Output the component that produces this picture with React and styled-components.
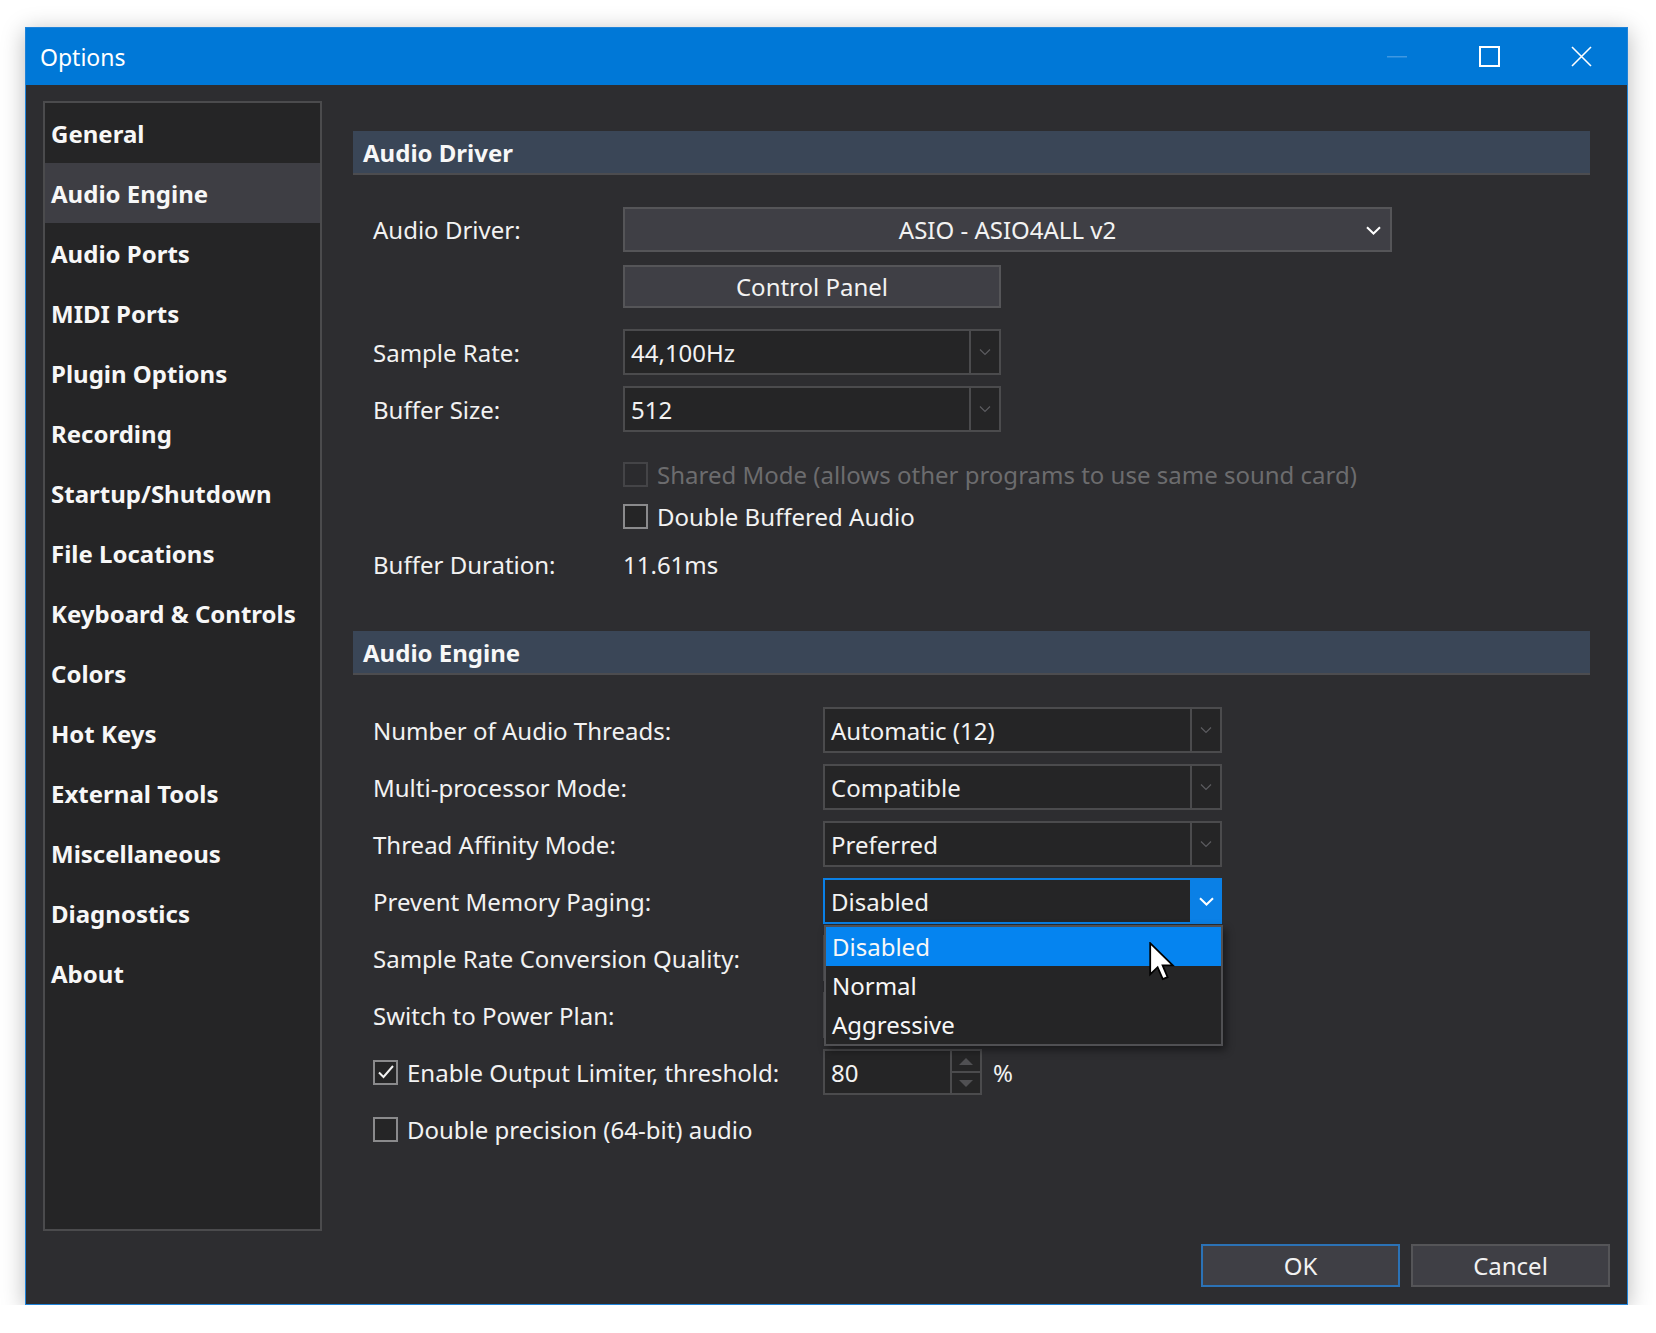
import React from "react";
import styled, { createGlobalStyle } from "styled-components";

const GlobalStyle = createGlobalStyle`
  html, body {
    margin: 0;
    padding: 0;
    background: #ffffff;
  }
  body {
    font-family: "Noto Sans", "Open Sans", sans-serif;
    color: #f2f2f2;
  }
`;

const navItems = [
  "General",
  "Audio Engine",
  "Audio Ports",
  "MIDI Ports",
  "Plugin Options",
  "Recording",
  "Startup/Shutdown",
  "File Locations",
  "Keyboard & Controls",
  "Colors",
  "Hot Keys",
  "External Tools",
  "Miscellaneous",
  "Diagnostics",
  "About",
];

const Page = styled.div`
  padding: 27px 0 0 25px;
`;

const Window = styled.div`
  width: 1603px;
  height: 1278px;
  box-sizing: border-box;
  border: 1px solid #1f83d9;
  background: #2d2d30;
  display: flex;
  flex-direction: column;
  box-shadow: 0 4px 22px rgba(0, 0, 0, 0.28);
`;

const TitleBar = styled.div`
  height: 57px;
  flex-shrink: 0;
  background: #0078d7;
  display: flex;
  align-items: center;
  padding-left: 14px;
`;

const Title = styled.div`
  flex: 1;
  font-size: 23px;
  color: #ffffff;
`;

const CaptionButton = styled.div`
  width: 92px;
  height: 57px;
  display: flex;
  align-items: center;
  justify-content: center;
`;

const Body = styled.div`
  flex: 1;
  padding: 16px 17px 17px;
  display: flex;
  flex-direction: column;
`;

const Main = styled.div`
  height: 1130px;
  display: flex;
  gap: 31px;
`;

const Sidebar = styled.div`
  width: 279px;
  box-sizing: border-box;
  border: 2px solid #4b4b4d;
  background: #252526;
`;

const NavItem = styled.div`
  height: 60px;
  display: flex;
  align-items: center;
  padding-left: 6px;
  font-size: 24px;
  font-weight: 700;
  color: #f7f7f7;
  background: ${(p) => (p.active ? "#3e3e44" : "transparent")};
`;

const Content = styled.div`
  flex: 1;
  margin-right: 20px;
  padding-top: 30px;
`;

const SectionHeader = styled.div`
  height: 42px;
  margin-top: ${(p) => p.top || 0}px;
  border-bottom: 2px solid #4c4c4f;
  background: #3a4657;
  display: flex;
  align-items: center;
  padding-left: 10px;
  font-size: 24px;
  font-weight: 700;
  color: #f7f7f7;
`;

const SectionBody = styled.div`
  padding: 32px 0 0 20px;
`;

const Row = styled.div`
  position: relative;
  display: flex;
  align-items: center;
  height: ${(p) => p.h || 46}px;
  margin-bottom: ${(p) => (p.gap === undefined ? 11 : p.gap)}px;
  padding-left: ${(p) => p.indent || 0}px;
`;

const Label = styled.div`
  width: ${(p) => p.w}px;
  flex-shrink: 0;
  font-size: 24px;
  color: ${(p) => (p.disabled ? "#6c6c6e" : "#f2f2f2")};
`;

const Value = styled.div`
  font-size: 24px;
`;

const DriverSelect = styled.div`
  width: 769px;
  height: 45px;
  box-sizing: border-box;
  border: 2px solid #555558;
  background: #3f3f45;
  display: flex;
  align-items: center;
  position: relative;
  font-size: 24px;
  justify-content: center;
`;

const DriverChevron = styled.svg`
  position: absolute;
  right: 9px;
  top: 17px;
`;

const PushButton = styled.div`
  width: ${(p) => p.w}px;
  height: 43px;
  box-sizing: border-box;
  border: 2px solid ${(p) => (p.primary ? "#2b72b6" : "#555558")};
  background: #3f3f45;
  display: flex;
  align-items: center;
  justify-content: center;
  font-size: 24px;
  color: #f2f2f2;
`;

const Select = styled.div`
  position: relative;
  width: ${(p) => p.w}px;
  height: 46px;
  box-sizing: border-box;
  border: 2px solid ${(p) => (p.focused ? "#0a80e6" : "#4b4b4d")};
  background: #252526;
  display: flex;
  align-items: stretch;
`;

const SelectText = styled.div`
  flex: 1;
  display: flex;
  align-items: center;
  padding-left: 6px;
  font-size: 24px;
`;

const SelectArrow = styled.div`
  width: 30px;
  box-sizing: border-box;
  border-left: 2px solid ${(p) => (p.focused ? "#0a80e6" : "#4b4b4d")};
  background: ${(p) => (p.focused ? "#0a80e6" : "transparent")};
  display: flex;
  align-items: center;
  justify-content: center;
`;

const Popup = styled.div`
  position: absolute;
  top: calc(100% + 3px);
  left: -1px;
  width: 399px;
  box-sizing: border-box;
  border: 2px solid #505053;
  background: #252526;
  box-shadow: 3px 4px 8px rgba(0, 0, 0, 0.45);
  z-index: 5;
`;

const PopupItem = styled.div`
  height: 39px;
  display: flex;
  align-items: center;
  padding-left: 6px;
  font-size: 24px;
  color: #f7f7f7;
  background: ${(p) => (p.active ? "#0584f0" : "transparent")};
`;

const Cursor = styled.svg`
  position: absolute;
  left: 323px;
  top: 15px;
`;

const CheckRow = styled.div`
  display: flex;
  align-items: center;
  height: ${(p) => p.h || 42}px;
  padding-left: ${(p) => p.indent || 0}px;
  margin-bottom: ${(p) => p.gap || 0}px;
`;

const CheckBox = styled.div`
  width: 25px;
  height: 25px;
  box-sizing: border-box;
  flex-shrink: 0;
  border: 2px solid ${(p) => (p.disabled ? "#444447" : "#8a8a8c")};
  background: ${(p) => (p.disabled ? "#2b2b2e" : "#252526")};
  margin-right: 9px;
  display: flex;
  align-items: center;
  justify-content: center;
`;

const CheckLabel = styled.div`
  font-size: 24px;
  color: ${(p) => (p.disabled ? "#6c6c6e" : "#f2f2f2")};
`;

const Spin = styled.div`
  width: 159px;
  height: 46px;
  box-sizing: border-box;
  border: 2px solid #4b4b4d;
  background: #252526;
  display: flex;
`;

const SpinButtons = styled.div`
  width: 30px;
  box-sizing: border-box;
  border-left: 2px solid #4b4b4d;
  display: flex;
  flex-direction: column;
`;

const SpinHalf = styled.div`
  flex: 1;
  display: flex;
  align-items: center;
  justify-content: center;
  border-top: ${(p) => (p.lower ? "2px solid #4b4b4d" : "none")};
`;

const Unit = styled.div`
  font-size: 24px;
  margin-left: 11px;
`;

const Footer = styled.div`
  margin-top: 13px;
  display: flex;
  justify-content: flex-end;
  gap: 11px;
`;

const FaintChevron = () => (
  <svg width="12" height="8" viewBox="0 0 12 8">
    <path d="M1 1.5 L6 6.5 L11 1.5" fill="none" stroke="#5c5c60" strokeWidth="1.2" />
  </svg>
);

const WhiteChevron = () => (
  <svg width="15" height="9" viewBox="0 0 15 9">
    <path d="M1 1.2 L7.5 7.5 L14 1.2" fill="none" stroke="#ffffff" strokeWidth="2" />
  </svg>
);

const DropSelect = ({ w, value, focused, children }) => (
  <Select w={w} focused={focused}>
    <SelectText>{value}</SelectText>
    <SelectArrow focused={focused}>{focused ? <WhiteChevron /> : <FaintChevron />}</SelectArrow>
    {children}
  </Select>
);

const Check = ({ checked, disabled, label, indent, h, gap }) => (
  <CheckRow indent={indent} h={h} gap={gap}>
    <CheckBox disabled={disabled}>
      {checked && (
        <svg width="18" height="16" viewBox="0 0 18 16">
          <path d="M2 8.5 L6.5 13 L16 2" fill="none" stroke="#f2f2f2" strokeWidth="2" />
        </svg>
      )}
    </CheckBox>
    <CheckLabel disabled={disabled}>{label}</CheckLabel>
  </CheckRow>
);

export default function App() {
  return (
    <>
      <GlobalStyle />
      <Page>
        <Window>
          <TitleBar>
            <Title>Options</Title>
            <CaptionButton>
              <svg width="20" height="2" viewBox="0 0 20 2">
                <rect x="0" y="0" width="20" height="1.5" fill="#3f98e2" />
              </svg>
            </CaptionButton>
            <CaptionButton>
              <svg width="21" height="21" viewBox="0 0 21 21">
                <rect x="1" y="1" width="19" height="19" fill="none" stroke="#ffffff" strokeWidth="2" />
              </svg>
            </CaptionButton>
            <CaptionButton>
              <svg width="21" height="21" viewBox="0 0 21 21">
                <path d="M1 1 L20 20 M20 1 L1 20" stroke="#ffffff" strokeWidth="1.6" />
              </svg>
            </CaptionButton>
          </TitleBar>
          <Body>
            <Main>
              <Sidebar>
                {navItems.map((n) => (
                  <NavItem key={n} active={n === "Audio Engine"}>
                    {n}
                  </NavItem>
                ))}
              </Sidebar>
              <Content>
                <SectionHeader>Audio Driver</SectionHeader>
                <SectionBody>
                  <Row h={45} gap={12}>
                    <Label w={250}>Audio Driver:</Label>
                    <DriverSelect>
                      ASIO - ASIO4ALL v2
                      <DriverChevron width="15" height="9" viewBox="0 0 15 9">
                        <path d="M1 1.2 L7.5 7.5 L14 1.2" fill="none" stroke="#ffffff" strokeWidth="2" />
                      </DriverChevron>
                    </DriverSelect>
                  </Row>
                  <Row h={45} gap={20} indent={250}>
                    <PushButton w={378}>Control Panel</PushButton>
                  </Row>
                  <Row>
                    <Label w={250}>Sample Rate:</Label>
                    <DropSelect w={378} value="44,100Hz" />
                  </Row>
                  <Row gap={21}>
                    <Label w={250}>Buffer Size:</Label>
                    <DropSelect w={378} value="512" />
                  </Row>
                  <Check disabled indent={250} label="Shared Mode (allows other programs to use same sound card)" />
                  <Check indent={250} gap={4} label="Double Buffered Audio" />
                  <Row gap={0}>
                    <Label w={250}>Buffer Duration:</Label>
                    <Value>11.61ms</Value>
                  </Row>
                </SectionBody>

                <SectionHeader top={44}>Audio Engine</SectionHeader>
                <SectionBody>
                  <Row>
                    <Label w={450}>Number of Audio Threads:</Label>
                    <DropSelect w={399} value="Automatic (12)" />
                  </Row>
                  <Row>
                    <Label w={450}>Multi-processor Mode:</Label>
                    <DropSelect w={399} value="Compatible" />
                  </Row>
                  <Row>
                    <Label w={450}>Thread Affinity Mode:</Label>
                    <DropSelect w={399} value="Preferred" />
                  </Row>
                  <Row>
                    <Label w={450}>Prevent Memory Paging:</Label>
                    <DropSelect w={399} value="Disabled" focused>
                      <Popup>
                        <PopupItem active>Disabled</PopupItem>
                        <PopupItem>Normal</PopupItem>
                        <PopupItem>Aggressive</PopupItem>
                        <Cursor width="26" height="39" viewBox="0 0 13 19.5">
                          <path
                            d="M0.6 0.6 L0.6 16.2 L4.3 12.6 L6.9 18.6 L9.3 17.6 L6.8 11.7 L11.9 11.7 Z"
                            fill="#ffffff"
                            stroke="#000000"
                            strokeWidth="0.9"
                            strokeLinejoin="miter"
                          />
                        </Cursor>
                      </Popup>
                    </DropSelect>
                  </Row>
                  <Row>
                    <Label w={450}>Sample Rate Conversion Quality:</Label>
                    <DropSelect w={399} value="" />
                  </Row>
                  <Row>
                    <Label w={450}>Switch to Power Plan:</Label>
                    <DropSelect w={399} value="" />
                  </Row>
                  <Row>
                    <Label w={450}>
                      <Check checked h={46} label="Enable Output Limiter, threshold:" />
                    </Label>
                    <Spin>
                      <SelectText>80</SelectText>
                      <SpinButtons>
                        <SpinHalf>
                          <svg width="14" height="7" viewBox="0 0 14 7">
                            <path d="M0 7 L7 0 L14 7 Z" fill="#505053" />
                          </svg>
                        </SpinHalf>
                        <SpinHalf lower>
                          <svg width="14" height="7" viewBox="0 0 14 7">
                            <path d="M0 0 L7 7 L14 0 Z" fill="#505053" />
                          </svg>
                        </SpinHalf>
                      </SpinButtons>
                    </Spin>
                    <Unit>%</Unit>
                  </Row>
                  <Check h={46} label="Double precision (64-bit) audio" />
                </SectionBody>
              </Content>
            </Main>
            <Footer>
              <PushButton w={199} primary>
                OK
              </PushButton>
              <PushButton w={199}>Cancel</PushButton>
            </Footer>
          </Body>
        </Window>
      </Page>
    </>
  );
}
